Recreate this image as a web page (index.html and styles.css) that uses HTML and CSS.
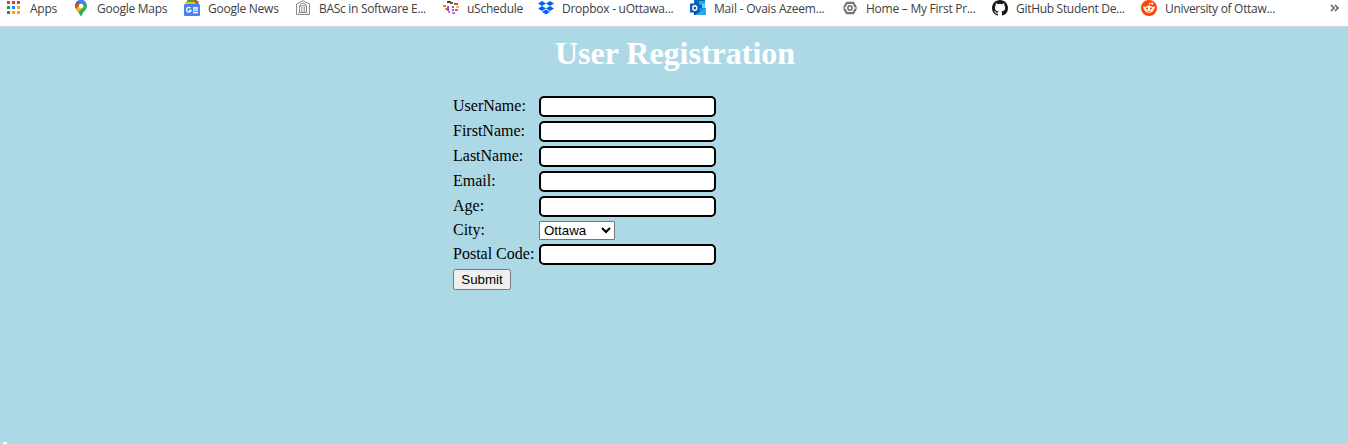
FILE: index.html
```html
<!DOCTYPE html>
<html lang="en">
<head>
<meta charset="utf-8">
<title>User Registration</title>
<link rel="stylesheet" href="styles.css">
</head>
<body>
<nav class="bookmarks">
  <a class="bookmark apps"><svg class="icon" viewBox="0 0 16 16"><g fill="#e13b2c"><path d="M1 1h3v3H1zM6 1h3v3H6zM11 1h3v3h-3z"/></g><path fill="#189b4b" d="M1 6h3v3H1z"/><path fill="#2d83f2" d="M6 6h3v3H6z"/><path fill="#fba60d" d="M11 6h3v3h-3zM6 11h3v3H6zM11 11h3v3h-3z"/><path fill="#189b4b" d="M1 11h3v3H1z"/></svg><span class="label">Apps</span></a>
  <a class="bookmark maps"><svg class="icon" viewBox="0 0 16 16"><path fill="#34a853" d="M8 0a6 6 0 0 1 6 6c0 4-4 5-5 9q-1 2-2 0C6 12 2 9 2 6a6 6 0 0 1 6-6z"/><path fill="#1a73e8" d="M3 2.400A6 6 0 0 1 6.200.2L8 4 5 7z"/><path fill="#4285f4" d="M6.200.2A6 6 0 0 1 13 2.500L9 7 6 4z"/><path fill="#ea4335" d="M3.400 2.200 6.300 4.800 3.300 9Q.6 5 3.400 2.200z"/><path fill="#fbbc04" d="m3.100 9 6.500-7.600L11 7l-5.500 5z"/><path fill="#4285f4" d="M6.300.3A6 6 0 0 1 12.800 2.500L9.500 6 6 4z"/><circle cx="8" cy="6" r="2.200" fill="#fff"/></svg><span class="label">Google Maps</span></a>
  <a class="bookmark news"><svg class="icon" viewBox="0 0 16 16"><path fill="#34a853" d="M3 0h10v5H3z"/><path fill="#ea4335" d="m10 0 5 1.500-1 3.500H9z"/><path fill="#fbbc04" d="m1 2 10 0 1 3H2z"/><rect y="4" width="16" height="12" rx="1" fill="#4285f4"/><path d="M6.500 8.200A2.300 2.300 0 1 0 7 10.500H4.800M9 8h5M9 10.200h5M9 12.500h5" stroke="#fff" stroke-width="1.300" fill="none"/></svg><span class="label">Google News</span></a>
  <a class="bookmark basc"><svg class="icon" viewBox="0 0 16 16"><path d="M1.500 14.500V4L8 .7 14.500 4v10.500zM3.500 12.500h9M4 5.800h8M4.500 6v6M6.800 7v5M9.200 7v5M11.500 6v6M5 4.500 8 3l3 1.500" fill="none" stroke="#8a8583"/></svg><span class="label">BASc in Software E...</span></a>
  <a class="bookmark schedule"><svg class="icon" viewBox="0 0 16 16"><path fill="#ed8030" d="M0 5h3v2H0zM2 8h3v2H2z"/><path fill="#912323" d="M4 1h4v2H4z"/><path fill="#267b33" d="M7 2h3v2H7z"/><path fill="#d14f50" d="M11 3h4v2h-4z"/><path fill="#8d54cc" d="M4 6h2v5H4zM9 6h2v2H9z"/><path fill="#e8c447" d="M13 6h3v2h-3z"/><path fill="#d46ccc" d="M5 11h2v2H5zM9 12h3v2H9z"/><path fill="#4a82d8" d="M9 9h2v2H9z"/><path fill="#bc5b9a" d="M12 9h3v2h-3z"/></svg><span class="label">uSchedule</span></a>
  <a class="bookmark dropbox"><svg class="icon" viewBox="0 0 16 16"><path fill="#0061fe" d="m4 1 4 2.500L4 6 0 3.500zM12 1l4 2.500L12 6 8 3.500zM4 6l4 2.500L4 11 0 8.500zM12 6l4 2.500-4 2.500-4-2.500zM8 9.500l4 2.400L8 14.500l-4-2.600z"/></svg><span class="label">Dropbox - uOttawa...</span></a>
  <a class="bookmark mail"><svg class="icon" viewBox="0 0 16 16"><path fill="#0a65b5" d="M4 0h11v10H4z"/><path fill="#28a8ea" d="M9 1h6v4H9z"/><path fill="#50d9ff" d="M12 4h3v4h-3z"/><path fill="#1490df" d="M4 8h12v7H4z"/><path fill="#123f72" d="M4 7.500 16 15H4z"/><path fill="#28a8ea" d="m16 8-11 6.500.5.500H16z"/><rect y="3.500" width="9.500" height="9" rx=".6" fill="#0560ba"/><ellipse cx="4.800" cy="8" rx="2" ry="2.300" fill="none" stroke="#fff" stroke-width="1.400"/></svg><span class="label">Mail - Ovais Azeem...</span></a>
  <a class="bookmark home"><svg class="icon" viewBox="0 0 16 16"><path d="M4.800 2.800h6.400L14.200 8l-3 5.200H4.800L1.800 8z" fill="none" stroke="#757575" stroke-width="2.200" stroke-linejoin="round"/><circle cx="8" cy="8" r="2.100" fill="none" stroke="#757575" stroke-width="1.700"/><path d="M0 8h3M13 8h3" stroke="#fff" stroke-width=".8"/></svg><span class="label">Home – My First Pr...</span></a>
  <a class="bookmark github"><svg class="icon" viewBox="0 0 16 16"><path fill="#191717" d="M8 0C3.580 0 0 3.580 0 8c0 3.540 2.290 6.530 5.470 7.590.4.070.55-.17.55-.38 0-.19-.01-.82-.01-1.490-2.010.37-2.530-.49-2.690-.94-.09-.23-.48-.94-.82-1.130-.28-.15-.68-.52-.01-.53.63-.01 1.080.58 1.230.82.72 1.210 1.870.87 2.330.66.07-.52.28-.87.51-1.070-1.780-.2-3.640-.89-3.640-3.950 0-.87.31-1.590.82-2.150-.08-.2-.36-1.020.08-2.120 0 0 .67-.21 2.200.82a7.600 7.600 0 0 1 4 0c1.530-1.040 2.200-.82 2.200-.82.44 1.100.16 1.920.08 2.120.51.56.82 1.270.82 2.150 0 3.070-1.870 3.750-3.650 3.950.29.25.54.73.54 1.480 0 1.070-.01 1.930-.01 2.200 0 .21.15.46.55.38A8 8 0 0 0 16 8c0-4.420-3.580-8-8-8z"/></svg><span class="label">GitHub Student De...</span></a>
  <a class="bookmark reddit"><svg class="icon" viewBox="0 0 16 16"><circle cx="8" cy="8" r="8" fill="#ff4500"/><ellipse cx="8" cy="9.300" rx="4.800" ry="3.500" fill="#fff"/><circle cx="3.300" cy="7.800" r="1.200" fill="#fff"/><circle cx="12.700" cy="7.800" r="1.200" fill="#fff"/><circle cx="11.200" cy="3.700" r="1.100" fill="#fff"/><path d="m8 6 .7-3 2.500.6" fill="none" stroke="#fff" stroke-width=".7"/><circle cx="6.100" cy="8.500" r="1" fill="#ff4500"/><circle cx="9.900" cy="8.500" r="1" fill="#ff4500"/><path d="M6 10.800q2 1.300 4 0" fill="none" stroke="#ff4500" stroke-width=".8"/></svg><span class="label">University of Ottaw...</span></a>
  <svg class="more" viewBox="0 0 9 8"><path d="m1 1 3 3-3 3M5 1l3 3-3 3" fill="none" stroke="#5f6368" stroke-width="1.600"/></svg>
</nav>
<main class="page">
  <h1 class="title">User Registration</h1>
  <form class="form">
    <label class="name" for="user">UserName:</label><input class="field" id="user">
    <label class="name" for="first">FirstName:</label><input class="field" id="first">
    <label class="name" for="last">LastName:</label><input class="field" id="last">
    <label class="name" for="email">Email:</label><input class="field" id="email">
    <label class="name" for="age">Age:</label><input class="field" id="age">
    <label class="name" for="city">City:</label><select class="city" id="city"><option>Ottawa</option></select>
    <label class="name" for="postal">Postal Code:</label><input class="field" id="postal">
    <button class="submit" type="button">Submit</button>
  </form>
  <div class="corner"></div>
</main>
</body>
</html>
```
FILE: styles.css
```css
body {
  margin: 0;
  height: 444px;
  display: flex;
  flex-direction: column;
  overflow: hidden;
  background: #add8e6;
  font: 16px/18px "Liberation Serif", "Times New Roman", serif;
  color: #000;
}
.bookmarks {
  box-sizing: border-box;
  height: 27px;
  flex: none;
  display: flex;
  align-items: flex-start;
  gap: 16px;
  padding-left: 6px;
  background: #fff;
  border-bottom: 1px solid #d4d6d8;
  font: 12px/17px "Open Sans", "Noto Sans", sans-serif;
  color: #3c4043;
}
.bookmark {
  display: flex;
  flex: none;
  gap: 8px;
}
.icon {
  width: 16px;
  height: 16px;
  flex: none;
}
.label {
  white-space: nowrap;
  letter-spacing: -0.25px;
}
.apps .label { width: 27px; }
.maps .label { width: 71px; }
.news .label { width: 71px; }
.basc .label { width: 108px; letter-spacing: -0.3px; }
.schedule .label { width: 55px; }
.dropbox .label { width: 112px; }
.mail .label { width: 112px; letter-spacing: -0.2px; }
.home .label { width: 110px; }
.github .label { width: 109px; letter-spacing: -0.3px; }
.reddit .label { width: 111px; letter-spacing: -0.3px; }
.more {
  width: 9px;
  height: 8px;
  margin: 4px 9px 0 auto;
}
.page {
  flex: 1;
  display: flex;
  flex-direction: column;
}
.title {
  margin: 8px 0 0 2px;
  font-size: 32px;
  line-height: 37px;
  text-align: center;
  color: #fff;
}
.form {
  display: grid;
  grid-template-columns: 86px 177px;
  row-gap: 4px;
  align-items: center;
  justify-items: start;
  margin: 24px 0 0 453px;
}
.name {
  padding-bottom: 1px;
}
.field {
  box-sizing: border-box;
  width: 177px;
  height: 21px;
  border: 2px solid #000;
  border-radius: 5px;
  background: #fff;
}
.city {
  box-sizing: border-box;
  width: 76px;
  height: 19px;
  font: 13.333px "Liberation Sans", Arial, sans-serif;
  background: #fff;
  border: 1px solid #767676;
  border-radius: 1px;
}
.submit {
  box-sizing: border-box;
  width: 58px;
  height: 21px;
  padding: 1px 6px;
  font: 13.333px "Liberation Sans", Arial, sans-serif;
}
.corner {
  width: 4px;
  height: 2px;
  margin: auto 0 0 3px;
  background: #fff;
}
```
